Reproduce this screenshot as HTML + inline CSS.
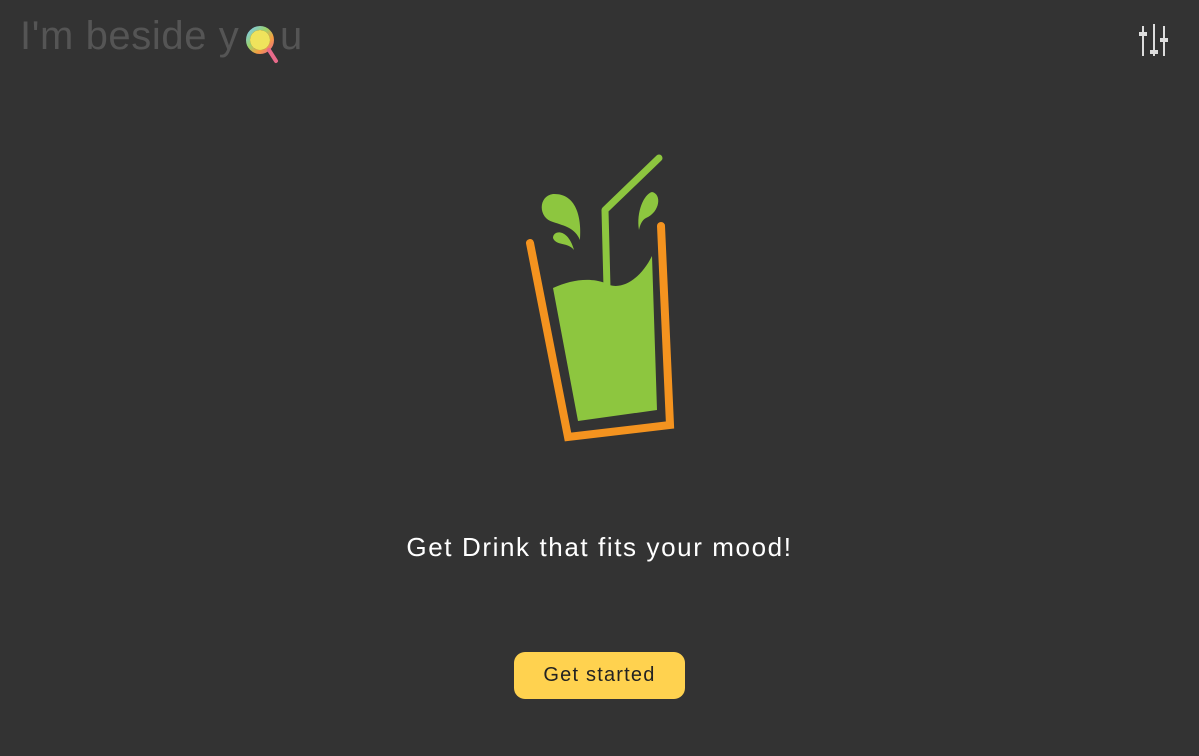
<!DOCTYPE html>
<html><head><style>
body{margin:0;width:1199px;height:756px;background:#333333;overflow:hidden;font-family:"Liberation Sans",sans-serif;position:relative}
.logo{position:absolute;top:14px;font-size:40px;color:#555;letter-spacing:0.6px}
.t{position:absolute;top:532px;left:0;width:1199px;text-align:center;color:#fff;font-size:26px;letter-spacing:1.6px}
.b{position:absolute;left:514px;top:652px;width:171px;height:47px;background:#ffd24f;border-radius:11px;text-align:center;line-height:47px;font-size:20px;color:#222;letter-spacing:1.2px}
</style></head><body>
<div class="logo" style="left:20px">I'm beside y</div>
<div class="logo" style="left:280px">u</div>
<svg style="position:absolute;left:242px;top:22px" width="40" height="44" viewBox="0 0 40 44">
<circle cx="18" cy="18" r="12" fill="none" stroke="url(#g)" stroke-width="4"/>
<circle cx="18" cy="18" r="10" fill="#efe35c"/>
<line x1="27" y1="28" x2="34" y2="39" stroke="#e86a8a" stroke-width="4" stroke-linecap="round"/>
<defs><linearGradient id="g" x1="0" y1="0" x2="1" y2="1"><stop offset="0" stop-color="#7ec8f0"/><stop offset=".4" stop-color="#9bd36a"/><stop offset=".7" stop-color="#f5a040"/><stop offset="1" stop-color="#e86a8a"/></linearGradient></defs>
</svg>
<svg style="position:absolute;left:1130px;top:20px" width="50" height="45">
<g stroke="#ddd" stroke-width="2"><line x1="13" y1="6" x2="13" y2="36"/><line x1="24" y1="4" x2="24" y2="36"/><line x1="34" y1="6" x2="34" y2="36"/></g>
<g fill="#ddd"><rect x="9" y="12" width="8" height="4"/><rect x="20" y="30" width="8" height="4"/><rect x="30" y="18" width="8" height="4"/></g>
</svg>
<svg style="position:absolute;left:0;top:0" width="1199" height="756">
<path d="M530 243 L568 437 L670 425 L661 226" fill="none" stroke="#f4931f" stroke-width="8" stroke-linecap="round" stroke-linejoin="miter"/>
<path d="M553 288 C570 280 590 277 605 283 C620 292 640 280 652 256 L657 410 L578 421 Z" fill="#8dc63f"/>
<path d="M607 288 L605 210 L659 158" fill="none" stroke="#8dc63f" stroke-width="7" stroke-linecap="round" stroke-linejoin="round"/>
<path d="M580 240 C575 228 565 226 553 222 C538 218 538 196 553 194 C575 193 582 215 580 240 Z" fill="#8dc63f"/>
<path d="M574 250 C568 242 556 246 553 238 C553 230 568 228 574 250 Z" fill="#8dc63f"/>
<path d="M639 230 C636 212 644 194 652 192 C662 194 660 212 646 218 C642 220 640 225 639 230 Z" fill="#8dc63f"/>
</svg>
<div class="t">Get Drink that fits your mood!</div>
<div class="b">Get started</div>
</body></html>
